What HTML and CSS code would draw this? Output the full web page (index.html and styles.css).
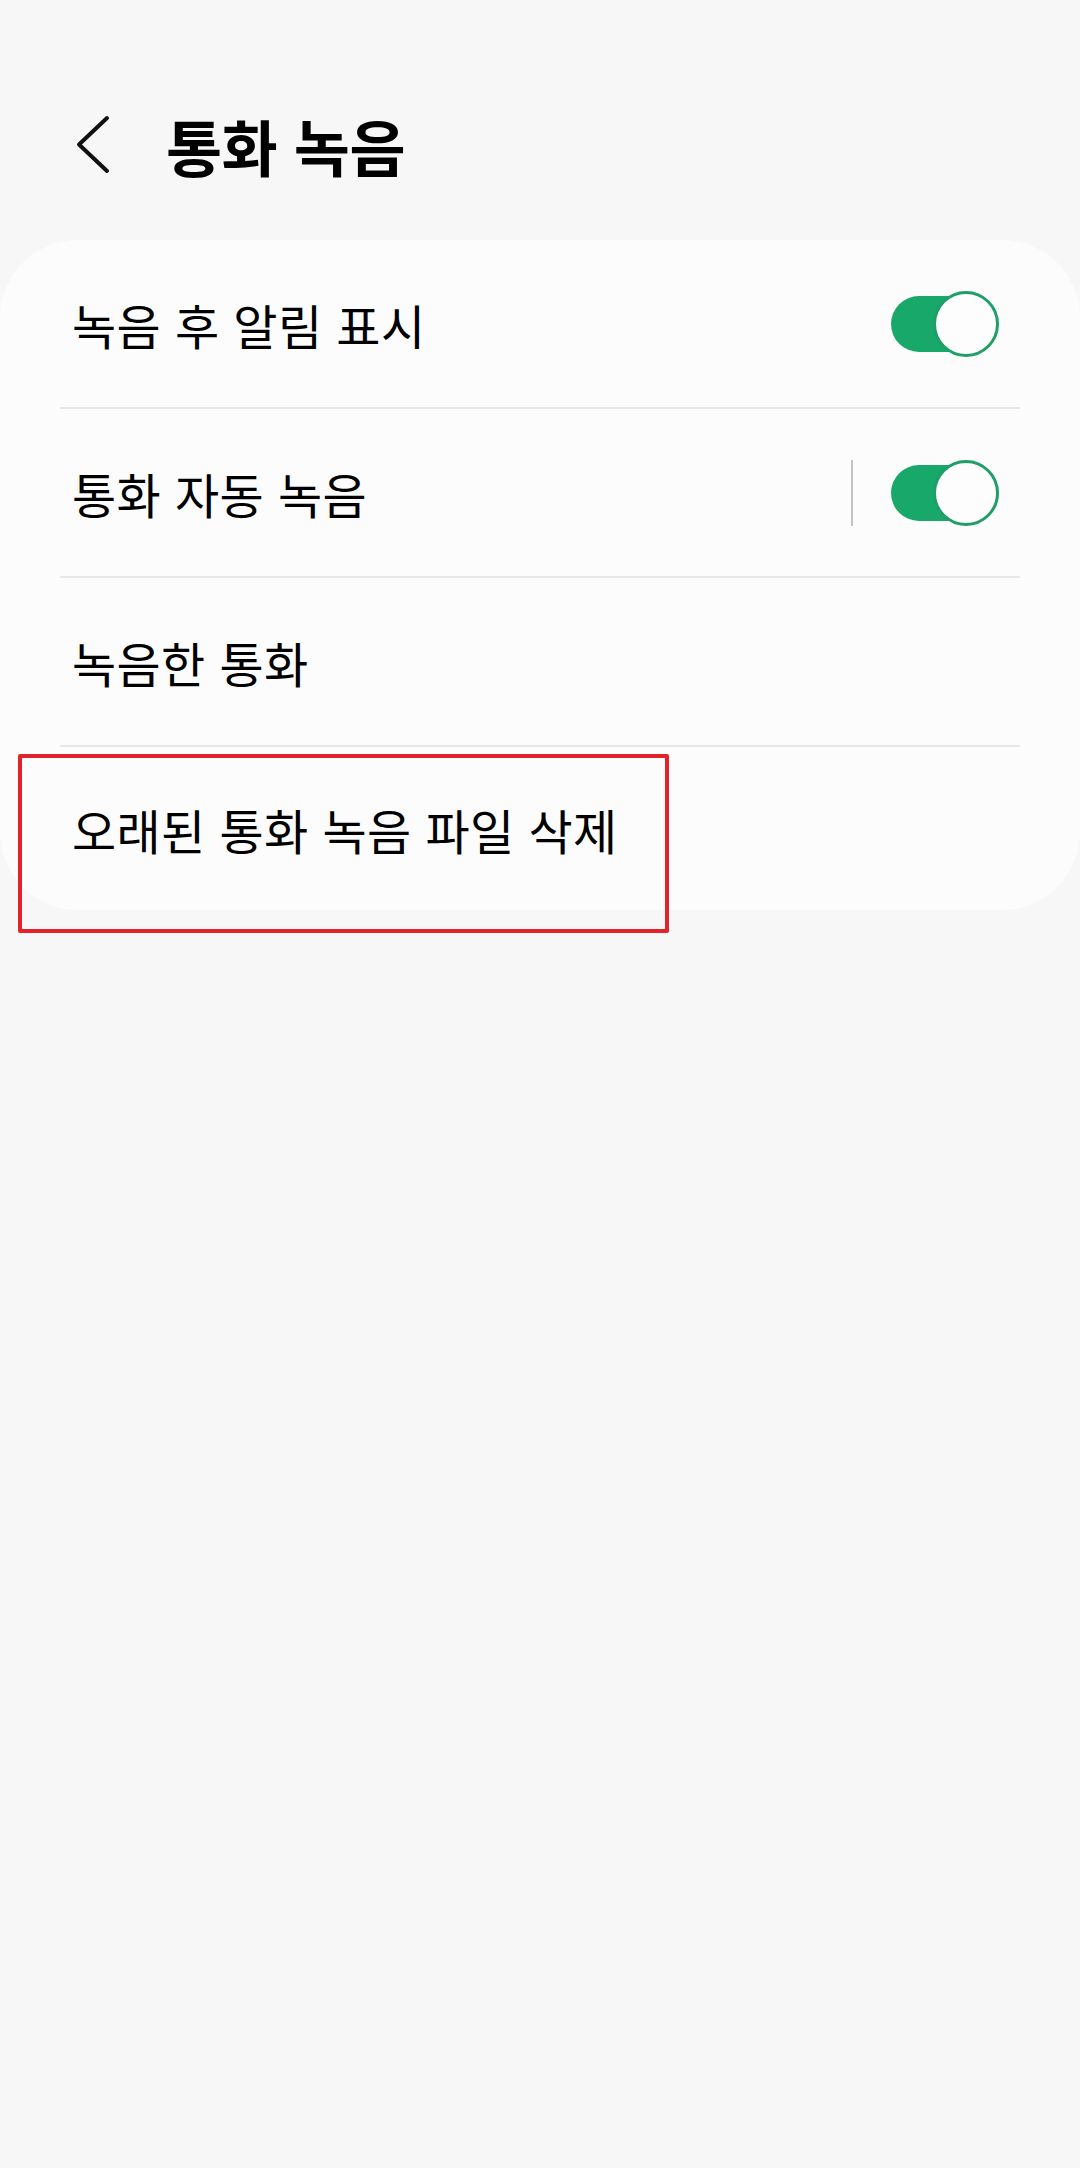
FILE: index.html
```html
<!DOCTYPE html>
<html lang="ko">
<head>
<meta charset="utf-8">
<link rel="stylesheet" href="styles.css">
</head>
<body>
<div class="page">
  <header class="appbar">
    <svg class="back" width="36" height="60" viewBox="0 0 36 60"><polyline points="32,4 4,30.5 32,57" fill="none" stroke="#111" stroke-width="4" stroke-linecap="round" stroke-linejoin="round"/></svg>
    <h1 class="title">통화 녹음</h1>
  </header>
  <section class="card">
    <div class="row">
      <span class="label">녹음 후 알림 표시</span>
      <span class="switch"><span class="track"></span><span class="thumb"></span></span>
    </div>
    <div class="divider"></div>
    <div class="row">
      <span class="label">통화 자동 녹음</span>
      <span class="vsep"></span>
      <span class="switch"><span class="track"></span><span class="thumb"></span></span>
    </div>
    <div class="divider"></div>
    <div class="row">
      <span class="label">녹음한 통화</span>
    </div>
    <div class="divider"></div>
    <div class="row last">
      <span class="label">오래된 통화 녹음 파일 삭제</span>
    </div>
  </section>
  <div class="highlight"></div>
</div>
</body>
</html>
```

FILE: styles.css
```css
html, body {
  margin: 0;
  padding: 0;
  background: #f7f7f7;
}
.page {
  position: relative;
  width: 1080px;
  height: 2168px;
  background: #f7f7f7;
  font-family: "Noto Sans CJK KR", "Noto Sans", sans-serif;
  color: #000;
  overflow: hidden;
}
.appbar {
  height: 186px;
  padding-top: 54px;
  padding-left: 75px;
  display: flex;
  align-items: center;
}
.back {
  display: block;
  margin-top: -6px;
}
.title {
  margin: -4px 0 0 55px;
  font-size: 61px;
  font-weight: 700;
  line-height: 1;
  letter-spacing: -0.5px;
}
.card {
  background: #fcfcfc;
  border-radius: 78px;
  height: 670px;
  display: flex;
  flex-direction: column;
}
.row {
  height: 167px;
  display: flex;
  align-items: center;
  padding: 0 81px 0 72px;
}
.row.last {
  height: 163px;
}
.label {
  flex: 1;
  font-size: 48px;
  line-height: 1;
  font-weight: 400;
  letter-spacing: 0.4px;
}
.divider {
  height: 2px;
  margin: 0 60px;
  background: #e7e7e7;
}
.vsep {
  width: 2px;
  height: 66px;
  background: #c4c4c4;
  margin-right: 38px;
}
.switch {
  position: relative;
  width: 108px;
  height: 66px;
  display: block;
}
.track {
  position: absolute;
  left: 0;
  top: 5px;
  width: 92px;
  height: 56px;
  border-radius: 28px;
  background: #17a86a;
}
.thumb {
  position: absolute;
  right: 0;
  top: 0;
  width: 60px;
  height: 60px;
  border-radius: 50%;
  background: #fdfdfd;
  border: 3px solid #1f9e67;
}
.highlight {
  position: absolute;
  left: 18px;
  top: 754px;
  width: 643px;
  height: 171px;
  border: 4px solid #e3232b;
  border-radius: 2px;
}
```
